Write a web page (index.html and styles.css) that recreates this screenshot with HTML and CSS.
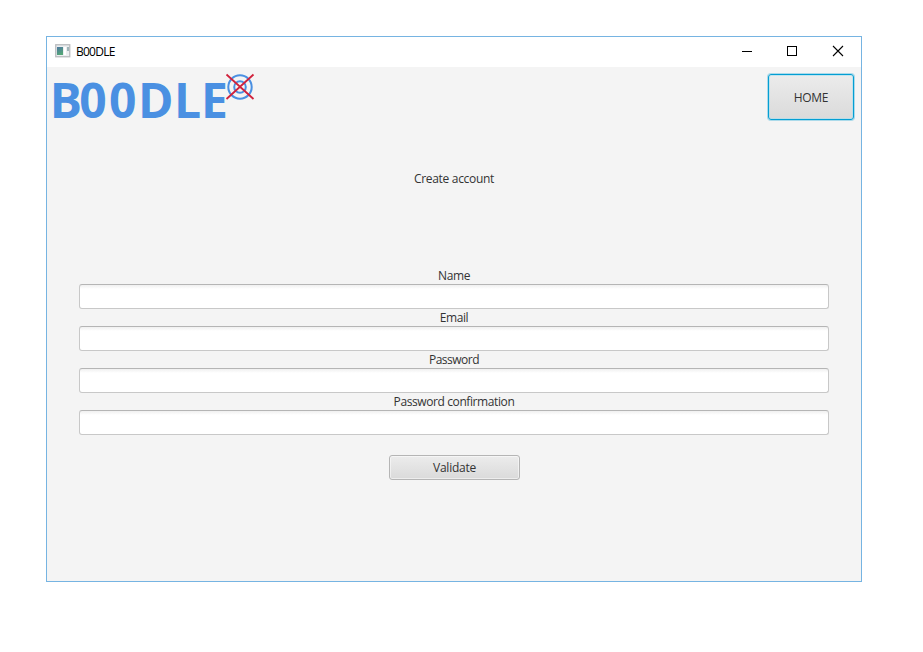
FILE: index.html
```html
<!DOCTYPE html>
<html lang="en">
<head>
<meta charset="utf-8">
<title>B00DLE</title>
<link rel="stylesheet" href="styles.css">
</head>
<body>
<div class="window">
  <header class="titlebar">
    <svg class="app-icon" width="16" height="14" viewBox="0 0 16 14">
      <defs><linearGradient id="pane" x1="0" y1="0" x2="0.4" y2="1"><stop offset="0" stop-color="#4c76a0"/><stop offset="1" stop-color="#54a578"/></linearGradient></defs>
      <rect x=".75" y=".75" width="14" height="12" fill="#eceef0" stroke="#b9bbbe" stroke-width="1.300"/>
      <rect x="2" y="3" width="6" height="8" fill="url(#pane)"/>
      <rect x="9" y="3" width="2" height="8" fill="#fff"/>
      <rect x="12" y="3" width="2" height="4" fill="#9fb4b8"/>
    </svg>
    <span class="title">B00DLE</span>
    <svg class="controls" width="104" height="12" viewBox="0 0 104 12" fill="none" stroke="#000">
      <path d="M0 6.500H10"/>
      <rect x="45.500" y="1.500" width="9" height="9"/>
      <path d="M91 1L101 11M101 1L91 11" stroke-width="1.100"/>
    </svg>
  </header>
  <main class="content">
    <div class="top">
      <svg class="logo" width="210" height="70" viewBox="0 0 210 70">
        <text class="wordmark" x="2.700 32.200 61.900 91 127 154" y="51.300">B00DLE</text>
        <g fill="none" stroke="#4a90e2" stroke-width="2">
          <circle cx="193" cy="20" r="11.700"/>
          <circle cx="193" cy="20" r="5.800"/>
        </g>
        <path d="M179.500 7.500L206.500 32M206.500 7.500L179.500 32" stroke="#d0213c" stroke-width="1.800"/>
      </svg>
      <button class="button home"><span>HOME</span></button>
    </div>
    <h1><span class="t-create">Create account</span></h1>
    <form class="form">
      <label for="name"><span class="t-name">Name</span></label>
      <input id="name" type="text">
      <label for="email"><span class="t-email">Email</span></label>
      <input id="email" type="text">
      <label for="password"><span class="t-pass">Password</span></label>
      <input id="password" type="password">
      <label for="confirmation"><span class="t-conf">Password confirmation</span></label>
      <input id="confirmation" type="password">
      <button class="button validate" type="button"><span>Validate</span></button>
    </form>
  </main>
</div>
</body>
</html>
```
FILE: styles.css
```css
* { box-sizing: border-box; }
body {
  margin: 0;
  padding: 36px 0 0 46px;
  background: #fff;
  color: #333;
  font: 12px/17px "Open Sans", sans-serif;
}
.window {
  width: 816px;
  height: 546px;
  display: flex;
  flex-direction: column;
  border: 1px solid #76b4e2;
  background: #f4f4f4;
}
.titlebar {
  height: 30px;
  display: flex;
  align-items: center;
  padding: 0 14px 0 8px;
  background: #fff;
}
.app-icon { margin-top: -2px; }
.title {
  margin: -2px 0 0 5px;
  color: #000;
  letter-spacing: -0.75px;
}
.controls { margin: -3px 1px 0 auto; }
.content { flex: 1; }
.top {
  height: 103px;
  display: flex;
  justify-content: space-between;
  padding-right: 7px;
}
.logo { display: block; }
.wordmark {
  fill: #4a90e2;
  font: 700 48px "Open Sans", sans-serif;
}
h1 {
  margin: 0;
  height: 97px;
  font: inherit;
  text-align: center;
}
.form {
  display: flex;
  flex-direction: column;
  width: 750px;
  margin-left: 32px;
}
label { height: 17px; text-align: center; }
input {
  height: 25px;
  margin: 0;
  border: 1px solid #c8c8c8;
  border-top-color: #b5b5b5;
  border-radius: 3px;
  outline: 0;
  background: linear-gradient(#f0f0f0, #fff 4px);
}
.button {
  padding: 0;
  border: 1px solid #b5b5b5;
  border-radius: 3px;
  background: linear-gradient(#ececec, #dadada);
  box-shadow: inset 0 0 0 1px rgba(255, 255, 255, .5);
  color: #333;
  font: inherit;
}
.home {
  width: 86px;
  height: 46px;
  margin-top: 7px;
  border-color: #039ed3;
  box-shadow: 0 0 0 1px rgba(3, 158, 211, .3), inset 0 0 0 1px rgba(160, 222, 240, .55);
}
.validate {
  width: 131px;
  height: 25px;
  margin: 20px auto 0 310px;
}
.t-create, .home span { letter-spacing: -0.3px; }
.t-conf { letter-spacing: -0.4px; }
.t-pass { letter-spacing: -0.5px; }
.t-name, .t-email { letter-spacing: -0.4px; }
.validate span { letter-spacing: -0.25px; }
```
